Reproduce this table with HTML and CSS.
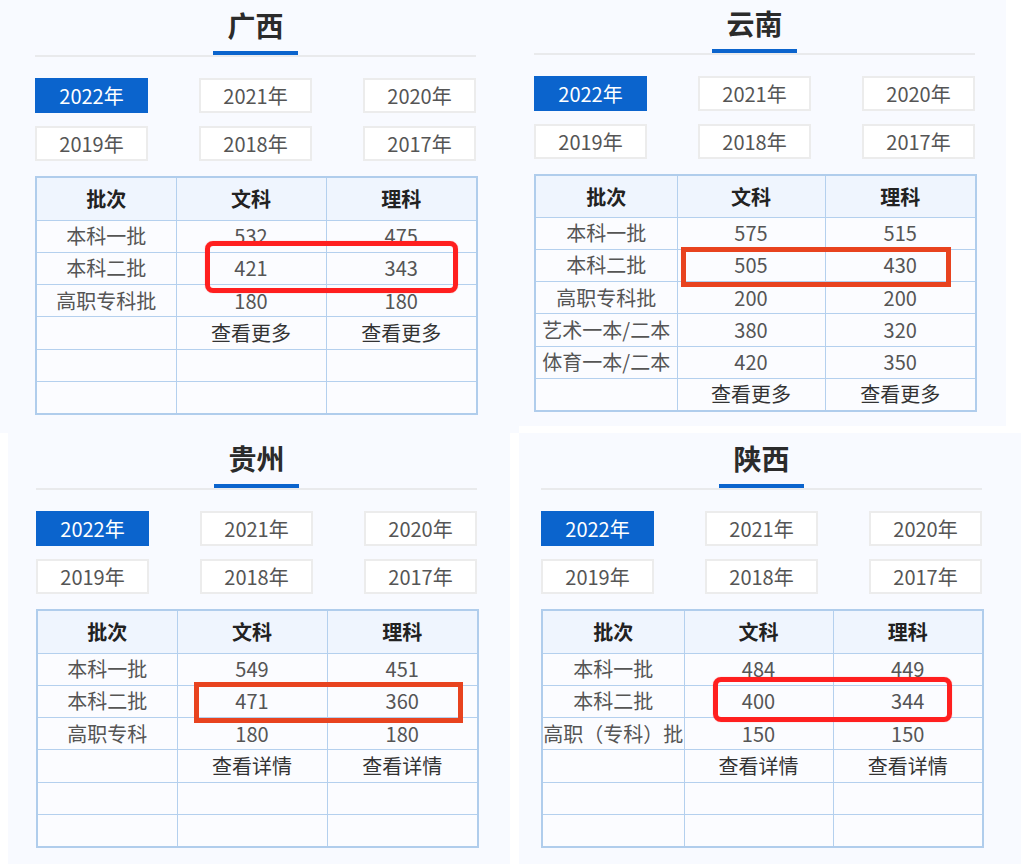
FILE: index.html
```html
<!DOCTYPE html>
<html lang="zh-CN">
<head>
<meta charset="utf-8">
<title>分数线</title>
<link rel="stylesheet" href="styles.css">
</head>
<body>
<div class="page">
  <div class="row row-top">
    <section class="panel p1">
      <div class="head"><h2 class="title">广西</h2><div class="bar"></div></div>
      <div class="years">
        <span class="yr active">2022年</span><span class="yr">2021年</span><span class="yr">2020年</span>
        <span class="yr">2019年</span><span class="yr">2018年</span><span class="yr">2017年</span>
      </div>
      <table class="score">
        <colgroup><col class="c1"><col class="c2"><col class="c3"></colgroup>
        <thead><tr><th>批次</th><th>文科</th><th>理科</th></tr></thead>
        <tbody>
          <tr><td>本科一批</td><td>532</td><td>475</td></tr>
          <tr><td>本科二批</td><td>421</td><td>343</td></tr>
          <tr><td>高职专科批</td><td>180</td><td>180</td></tr>
          <tr><td></td><td class="more">查看更多</td><td class="more">查看更多</td></tr>
          <tr><td></td><td></td><td></td></tr>
          <tr><td></td><td></td><td></td></tr>
        </tbody>
      </table>
      <div class="mark mark-round m1"></div>
    </section>
    <section class="panel p2">
      <div class="head"><h2 class="title">云南</h2><div class="bar"></div></div>
      <div class="years">
        <span class="yr active">2022年</span><span class="yr">2021年</span><span class="yr">2020年</span>
        <span class="yr">2019年</span><span class="yr">2018年</span><span class="yr">2017年</span>
      </div>
      <table class="score">
        <colgroup><col class="c1"><col class="c2"><col class="c3"></colgroup>
        <thead><tr><th>批次</th><th>文科</th><th>理科</th></tr></thead>
        <tbody>
          <tr><td>本科一批</td><td>575</td><td>515</td></tr>
          <tr><td>本科二批</td><td>505</td><td>430</td></tr>
          <tr><td>高职专科批</td><td>200</td><td>200</td></tr>
          <tr><td>艺术一本/二本</td><td>380</td><td>320</td></tr>
          <tr><td>体育一本/二本</td><td>420</td><td>350</td></tr>
          <tr><td></td><td class="more">查看更多</td><td class="more">查看更多</td></tr>
        </tbody>
      </table>
      <div class="mark mark-square m2"></div>
    </section>
  </div>
  <div class="row row-bottom">
    <section class="panel p3">
      <div class="head"><h2 class="title">贵州</h2><div class="bar"></div></div>
      <div class="years">
        <span class="yr active">2022年</span><span class="yr">2021年</span><span class="yr">2020年</span>
        <span class="yr">2019年</span><span class="yr">2018年</span><span class="yr">2017年</span>
      </div>
      <table class="score">
        <colgroup><col class="c1"><col class="c2"><col class="c3"></colgroup>
        <thead><tr><th>批次</th><th>文科</th><th>理科</th></tr></thead>
        <tbody>
          <tr><td>本科一批</td><td>549</td><td>451</td></tr>
          <tr><td>本科二批</td><td>471</td><td>360</td></tr>
          <tr><td>高职专科</td><td>180</td><td>180</td></tr>
          <tr><td></td><td class="more">查看详情</td><td class="more">查看详情</td></tr>
          <tr><td></td><td></td><td></td></tr>
          <tr><td></td><td></td><td></td></tr>
        </tbody>
      </table>
      <div class="mark mark-square m3"></div>
    </section>
    <section class="panel p4">
      <div class="head"><h2 class="title">陕西</h2><div class="bar"></div></div>
      <div class="years">
        <span class="yr active">2022年</span><span class="yr">2021年</span><span class="yr">2020年</span>
        <span class="yr">2019年</span><span class="yr">2018年</span><span class="yr">2017年</span>
      </div>
      <table class="score">
        <colgroup><col class="c1"><col class="c2"><col class="c3"></colgroup>
        <thead><tr><th>批次</th><th>文科</th><th>理科</th></tr></thead>
        <tbody>
          <tr><td>本科一批</td><td>484</td><td>449</td></tr>
          <tr><td>本科二批</td><td>400</td><td>344</td></tr>
          <tr><td>高职（专科）批</td><td>150</td><td>150</td></tr>
          <tr><td></td><td class="more">查看详情</td><td class="more">查看详情</td></tr>
          <tr><td></td><td></td><td></td></tr>
          <tr><td></td><td></td><td></td></tr>
        </tbody>
      </table>
      <div class="mark mark-round m4"></div>
    </section>
  </div>
</div>
</body>
</html>
```

FILE: styles.css
```css
* { box-sizing: border-box; }
html, body { margin: 0; padding: 0; background: #ffffff; }
body {
  font-family: "Microsoft YaHei", "Noto Sans CJK SC", "Noto Sans", sans-serif;
  width: 1021px;
  height: 864px;
  overflow: hidden;
}
.page { display: flex; flex-direction: column; }
.row { display: flex; align-items: flex-start; }

.panel {
  position: relative;
  background: #f8faff;
  padding-top: 10px;
}
.p1 { width: 519px; height: 433px; padding-left: 35px; }
.p2 { width: 487px; height: 426px; padding-left: 15px; padding-top: 8px; }
.p3 { width: 502px; height: 431px; margin-left: 8px; padding-left: 28px; }
.p4 { width: 502px; height: 431px; margin-left: 9px; padding-left: 22px; }

.head {
  width: 441px;
  text-align: center;
  border-bottom: 2px solid #e9eaec;
}
.title {
  margin: 0;
  font-size: 28px;
  line-height: 30px;
  font-weight: 700;
  color: #2b2b2b;
}
.bar {
  width: 85px;
  height: 4px;
  margin: 11px auto 0;
  background: #0b64cd;
}

.years {
  width: 441px;
  margin-top: 21px;
  display: grid;
  grid-template-columns: 113px 113px 113px;
  justify-content: space-between;
  row-gap: 13px;
}
.yr {
  height: 35px;
  background: #ffffff;
  border: 2px solid #ececec;
  color: #555555;
  font-size: 20px;
  line-height: 31px;
  text-align: center;
}
.yr.active {
  background: #0b64cd;
  border-color: #0b64cd;
  color: #ffffff;
}

.score {
  margin-top: 15px;
  width: 441px;
  table-layout: fixed;
  border-collapse: collapse;
  border: 2px solid #b0cdec;
  font-size: 20px;
  color: #555555;
}
.c1 { width: 140px; }
.c2 { width: 150px; }
.c3 { width: 151px; }
.p2 .c1, .p4 .c1 { width: 142px; }
.p2 .c2 { width: 148px; }
.p4 .c2 { width: 149px; }
.p4 .c3 { width: 150px; }

.score th, .score td {
  border: 1px solid #b4d0ee;
  padding: 0;
  text-align: center;
  white-space: nowrap;
  overflow: visible;
}
.score thead tr { height: 43px; }
.p2 .score thead tr { height: 42px; }
.score th {
  background: #eff5fe;
  color: #222222;
  font-weight: 700;
}
.score tbody tr { height: 32.3px; }
.score td { line-height: 30px; background: #fbfcff; }
.score td.more { color: #333333; }

.mark { position: absolute; pointer-events: none; }
.mark-round {
  border: 5px solid #ff1f1f;
  border-radius: 8px;
  box-shadow: 0 0 1px rgba(255, 40, 40, 0.6);
}
.mark-square { border: 5px solid #e8431f; }
.m1 { left: 205px; top: 241px; width: 253px; height: 52px; }
.m2 { left: 162px; top: 247px; width: 270px; height: 40px; }
.m3 { left: 186px; top: 249px; width: 269px; height: 41px; }
.m4 { left: 194px; top: 244px; width: 239px; height: 45px; }
```
